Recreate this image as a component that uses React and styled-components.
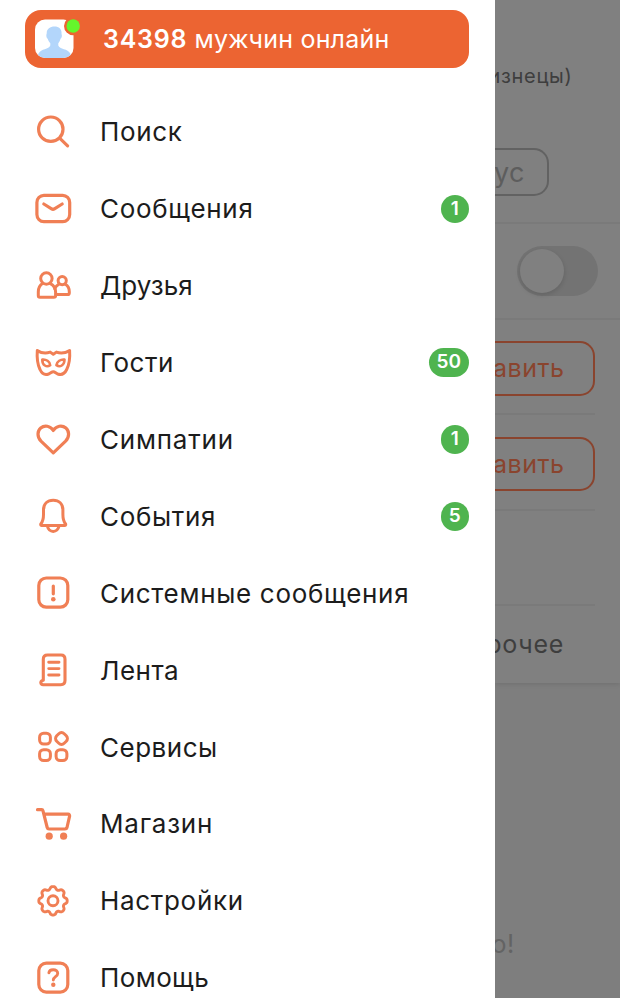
import React from "react";
import styled, { createGlobalStyle } from "styled-components";

const GlobalStyle = createGlobalStyle`
    * {
        box-sizing: border-box;
    }
    body {
        margin: 0;
        background: #808080;
        font-family: Inter, "Liberation Sans", sans-serif;
    }
`;

const Screen = styled.div`
    display: grid;
    grid-template-columns: 494.6px 1fr;
    height: 998px;
    overflow: hidden;
`;

const Drawer = styled.nav`
    background: #fff;
    padding: 10px 25.5px 0 25px;
    height: 998px;
    overflow: hidden;
`;

const Banner = styled.div`
    display: flex;
    align-items: center;
    height: 57.5px;
    padding-left: 9.5px;
    border-radius: 16px;
    background: #ec6432;
    color: #fff;
    font-size: 25px;
    letter-spacing: 0.2px;
    white-space: nowrap;
    svg {
        flex: none;
        margin-right: 21.5px;
    }
    b {
        font-weight: 600;
        letter-spacing: 0.75px;
    }
`;

const Menu = styled.ul`
    list-style: none;
    margin: 26px 0 0;
    padding: 0;
`;

const Item = styled.li`
    display: flex;
    align-items: center;
    height: 76.9px;
    padding-left: 8px;
    color: #1c1c1c;
    font-size: 26px;
    svg {
        flex: none;
        margin-right: 27px;
    }
`;

const Label = styled.span`
    flex: 1;
    letter-spacing: ${(p) => p.$tracking ?? 0.68}px;
    white-space: nowrap;
`;

const Badge = styled.span`
    min-width: 28.5px;
    height: 28.5px;
    padding: 0 8px;
    border-radius: 15px;
    background: #4fb44f;
    color: #fff;
    font-size: 19px;
    font-weight: 600;
    line-height: 28.5px;
    text-align: center;
`;

const Page = styled.div`
    display: flex;
    flex-direction: column;
    align-items: flex-end;
    height: 998px;
    overflow: hidden;
    background: #7e7e7e;
`;

const Card = styled.section`
    display: flex;
    flex-direction: column;
    align-items: flex-end;
    width: 100%;
    height: 683px;
    background: #808080;
    box-shadow: 0 1px 5px rgba(0, 0, 0, 0.12);
`;

const Line = styled.div`
    display: flex;
    align-items: center;
    justify-content: flex-end;
    flex: none;
    width: 100%;
    height: ${(p) => p.$height}px;
    padding-right: ${(p) => p.$right}px;
    color: ${(p) => p.$color || "#3e3e3e"};
    font-size: ${(p) => p.$size || 25}px;
    letter-spacing: 0.7px;
    white-space: nowrap;
    overflow: hidden;
`;

const Divider = styled.div`
    flex: none;
    width: ${(p) => (p.$full ? "100%" : "calc(100% - 25.5px)")};
    margin-right: ${(p) => (p.$full ? 0 : 25.5)}px;
    height: 2px;
    background: #7a7a7a;
`;

const Gap = styled.div`
    flex: none;
    height: ${(p) => p.$size}px;
`;

const ButtonSlot = styled.div`
    flex: none;
    width: 100%;
    padding-right: ${(p) => p.$right}px;
`;

const Outlined = styled.div`
    display: flex;
    flex: none;
    align-items: center;
    justify-content: flex-end;
    width: 100%;
    height: ${(p) => p.$height}px;
    padding-right: ${(p) => p.$pad}px;
    border: 2px solid ${(p) => p.$border};
    border-left: 0;
    border-radius: 0 15px 15px 0;
    color: ${(p) => p.$color};
    font-size: ${(p) => p.$size}px;
    letter-spacing: 0.5px;
    overflow: hidden;
`;

const Switch = styled.div`
    display: flex;
    align-items: center;
    width: 81px;
    height: 49.5px;
    padding: 2.5px;
    border-radius: 25px;
    background: #737373;
    &::before {
        content: "";
        width: 44px;
        height: 44px;
        border-radius: 50%;
        background: #808080;
        box-shadow: 0 2px 5px rgba(0, 0, 0, 0.14);
    }
`;

const IconBase = ({ children }) => (
    <svg
        width="40"
        height="40"
        viewBox="0 0 40 40"
        fill="none"
        stroke="#f07f55"
        strokeWidth="3.2"
        strokeLinecap="round"
        strokeLinejoin="round"
    >
        {children}
    </svg>
);

const Dot = ({ x, y, r }) => (
    <circle cx={x} cy={y} r={r} fill="#f07f55" stroke="none" />
);

// eight rounded teeth around (20, 19.8)
const gearPath = () => {
    const points = [];
    for (let i = 0; i < 160; i++) {
        const a = (i / 160) * Math.PI * 2;
        const wave = Math.tanh(1.3 * (Math.cos(8 * a) + 0.25));
        const r = 12.7 + 1.6 * wave;
        points.push(
            `${(20 + r * Math.cos(a)).toFixed(2)} ${(19.8 + r * Math.sin(a)).toFixed(2)}`
        );
    }
    return `M${points.join("L")}Z`;
};

const icons = {
    search: (
        <>
            <circle cx="17.8" cy="17.2" r="12.2" />
            <path d="M26.9 26.4L34.6 33.8" />
        </>
    ),
    mail: (
        <>
            <rect x="3.9" y="6.4" width="32.8" height="26.2" rx="7" />
            <path d="M10.8 15L18.6 19.8Q20 20.7 21.4 19.8L29.2 15" />
        </>
    ),
    friends: (
        <g strokeWidth="3">
            <circle cx="13.4" cy="12.5" r="5.7" />
            <path d="M9.5 17.6C6.8 19.3 5.3 22.3 5.3 26V29.6Q5.3 31.3 7 31.3H20.8Q22.6 31.3 22.6 29.6V26C22.6 22.3 20.6 19.3 17.4 17.6" />
            <circle cx="29.2" cy="14.6" r="4.1" />
            <path d="M25.8 18.3Q22.8 20 21.7 22.7M32.3 18.3C34.9 19.8 36.3 22.4 36.3 25.8V27Q36.3 28.6 34.7 28.6H23.2" />
        </g>
    ),
    mask: (
        <>
            <path
                d="M4.3 7.6C8.5 10.2 13 10.6 17.2 9.1L20.3 11.3L23.4 9.1C27.6 10.6 32 10.2 36.6 7.6C37.1 14.5 36.2 21.5 33.7 26.5C31.7 30.7 28.3 32.2 24.8 31C22.8 30.2 21.8 28.7 20.3 28.7C18.8 28.7 17.6 30.2 15.6 31C12.1 32.2 8.9 30.7 7 26.5C4.6 21.5 3.8 14.5 4.3 7.6Z"
                strokeWidth="3"
            />
            <path
                d="M9.3 16.5C13 16 17 18.5 17.2 22.2C13.7 24.6 9.2 22.5 9.3 16.5ZM31.5 16.5C27.8 16 23.8 18.5 23.4 22.2C27 24.6 31.4 22.5 31.5 16.5Z"
                strokeWidth="2.6"
            />
        </>
    ),
    heart: (
        <path d="M20.3 32.8L8 21.2C3.8 17 4.3 10.8 7.7 8C11.6 4.8 17.4 5.8 20.3 10.5C23.2 5.8 29 4.8 32.9 8C36.3 10.8 36.8 17 32.6 21.2Z" />
    ),
    bell: (
        <g strokeWidth="3">
            <path d="M8.5 29.4C7.6 29.4 7.5 28.4 8 27.7C10 25.2 10.5 22.6 10.5 18.5V14C10.5 8 14.5 4.3 20.2 4.3C25.9 4.3 29.9 8 29.9 14V18.5C29.9 22.6 30.4 25.2 32.4 27.7C32.9 28.4 32.8 29.4 31.9 29.4Z" />
            <path d="M14.3 30C15.2 33.5 17.3 35.4 20.2 35.4C23.1 35.4 25.2 33.5 26.1 30" />
        </g>
    ),
    alert: (
        <>
            <rect x="5.8" y="5" width="29" height="29.2" rx="7.5" />
            <path d="M20.3 13V20.8" />
            <Dot x={20.3} y={26.3} r={2.3} />
        </>
    ),
    feed: (
        <>
            <path
                d="M10.3 30.3V9.2Q10.3 5 14.5 5H28Q32 5 32 9.2V30.6Q32 34.7 27.8 34.7H10.2Q8 34.5 7.8 32.6Q8 30.8 10.3 30.3Z"
                strokeWidth="3.1"
            />
            <path d="M15.7 12.2H26M15.7 18.6H26M15.7 25H26" strokeWidth="2.9" />
        </>
    ),
    services: (
        <g strokeWidth="3">
            <rect x="6.6" y="6.2" width="10.8" height="10.8" rx="4" />
            <rect
                x="23.2"
                y="6.2"
                width="10.6"
                height="10.6"
                rx="3.8"
                transform="rotate(45 28.5 11.5)"
            />
            <rect x="6.6" y="22.7" width="10.8" height="10.8" rx="4" />
            <rect x="23.1" y="22.7" width="10.8" height="10.8" rx="4" />
        </g>
    ),
    cart: (
        <>
            <path d="M4.5 5.7H8.7Q9.7 5.7 10 6.8L14.2 23.5Q14.6 25 16 25H32Q33.6 25 34 23.5L36.6 12.2Q36.8 10.3 35 10.2H11.5" />
            <Dot x={16.2} y={32.2} r={3.6} />
            <Dot x={30.6} y={32.2} r={3.6} />
        </>
    ),
    settings: (
        <g strokeWidth="2.9">
            <path d={gearPath()} />
            <circle cx="20" cy="19.8" r="5" />
        </g>
    ),
    help: (
        <>
            <rect x="5.8" y="5.1" width="29" height="29" rx="7.5" />
            <path
                d="M15.9 14.7C16.2 12.6 18 11.7 20.2 11.7C22.8 11.7 24.7 13.2 24.7 15.4C24.7 18.5 20.3 18.7 20.3 22"
                strokeWidth="2.9"
            />
            <Dot x={20.3} y={26.8} r={2.2} />
        </>
    ),
};

const items = [
    { icon: "search", label: "Поиск" },
    { icon: "mail", label: "Сообщения", count: 1 },
    { icon: "friends", label: "Друзья", tracking: 0 },
    { icon: "mask", label: "Гости", count: 50, tracking: 0.5 },
    { icon: "heart", label: "Симпатии", count: 1, tracking: 0.8 },
    { icon: "bell", label: "События", count: 5 },
    { icon: "alert", label: "Системные сообщения" },
    { icon: "feed", label: "Лента", tracking: 0.5 },
    { icon: "services", label: "Сервисы", tracking: 0.5 },
    { icon: "cart", label: "Магазин", tracking: 0.8 },
    { icon: "settings", label: "Настройки" },
    { icon: "help", label: "Помощь", tracking: 0.4 },
];

const Avatar = () => (
    <svg width="47" height="42" viewBox="0 0 47 42">
        <clipPath id="avatar">
            <rect x="0" y="1.5" width="38.5" height="38.5" rx="10" />
        </clipPath>
        <rect x="0" y="1.5" width="38.5" height="38.5" rx="10" fill="#fff" />
        <path
            clipPath="url(#avatar)"
            fill="#b3d6fb"
            d="M11.7 15.5C11.5 11 15 8.5 19.5 8.5C24.5 8.5 27 11.5 26.5 16C27.3 17 26.8 20 25.5 20.8C25 23 24 24.3 23.3 25.3V27.5C24.5 31.5 33 30.5 35.3 35.5L36 41H2L3.5 35.5C6 30.5 14 31.5 15.3 27.5V25.3C14.2 24.2 13.2 22.7 12.7 20.8C11.3 20 11 17 11.7 15.5Z"
        />
        <circle cx="38.2" cy="8" r="9.2" fill="#ec6432" />
        <circle cx="38.2" cy="8" r="6.7" fill="#65f62c" />
    </svg>
);

const AddButton = () => (
    <ButtonSlot $right={25}>
        <Outlined $height={54.5} $pad={28.5} $size={25} $border="#8a442e" $color="#8a442e">
            бавить
        </Outlined>
    </ButtonSlot>
);

const SidePage = () => (
    <Page>
        <Card>
            <Gap $size={3} />
            <Line $height={145} $right={47.5} $size={20}>
                изнецы)
            </Line>
            <ButtonSlot $right={71.5}>
                <Outlined $height={48} $pad={21.5} $size={27} $border="#626262" $color="#5d5d5d">
                    ус
                </Outlined>
            </ButtonSlot>
            <Gap $size={26} />
            <Divider $full />
            <Line $height={94} $right={22}>
                <Switch />
            </Line>
            <Divider $full />
            <Gap $size={21} />
            <AddButton />
            <Gap $size={17} />
            <Divider />
            <Gap $size={22} />
            <AddButton />
            <Gap $size={17.5} />
            <Divider />
            <Gap $size={93} />
            <Divider />
            <Line $height={77} $right={56}>
                рочее
            </Line>
        </Card>
        <Gap $size={223} />
        <Line $height={76} $right={105} $color="#636363">
            о!
        </Line>
    </Page>
);

const App = () => {
    return (
        <Screen>
            <GlobalStyle />
            <Drawer>
                <Banner>
                    <Avatar />
                    <span>
                        <b>34398</b> мужчин онлайн
                    </span>
                </Banner>
                <Menu>
                    {items.map(({ icon, label, count, tracking }) => (
                        <Item key={icon}>
                            <IconBase>{icons[icon]}</IconBase>
                            <Label $tracking={tracking}>{label}</Label>
                            {count && <Badge>{count}</Badge>}
                        </Item>
                    ))}
                </Menu>
            </Drawer>
            <SidePage />
        </Screen>
    );
};

export default App;
